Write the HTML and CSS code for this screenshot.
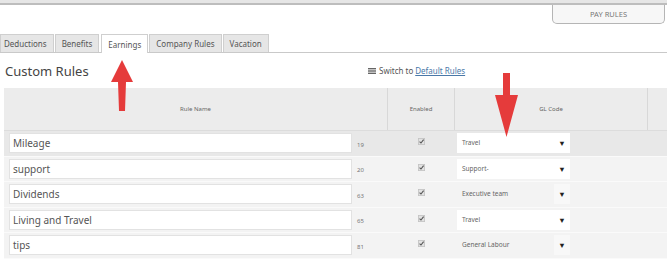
FILE: index.html
```html
<!DOCTYPE html>
<html>
  <head>
    <meta charset="UTF-8" />
    <title>Custom Rules</title>
    <link rel="stylesheet" href="styles.css">
  </head>
  <body>
    <div class="topbar"></div>
    <div class="pay-row">
      <button class="pay-rules">PAY RULES</button>
    </div>

    <!-- tab strip -->
    <div class="tabs">
      <span class="tab">Deductions</span>
      <span class="tab">Benefits</span>
      <span class="tab active">Earnings</span>
      <span class="tab">Company Rules</span>
      <span class="tab">Vacation</span>
    </div>

    <div class="title-row">
      <h1 class="title">Custom Rules</h1>
      <div class="switch">
        <svg width="8" height="6" viewBox="0 0 8 6"><rect x="0" y="0" width="8" height="1.4" fill="#666"/><rect x="0" y="2.3" width="8" height="1.4" fill="#666"/><rect x="0" y="4.6" width="8" height="1.4" fill="#666"/></svg>
        Switch to <a href="#">Default Rules</a>
      </div>
    </div>

    <div class="rules">
      <div class="head">
        <div class="hcell">Rule Name</div>
        <div class="hcell">Enabled</div>
        <div class="hcell">GL Code</div>
        <div class="hcell last"></div>
      </div>

      <div class="row current">
        <div class="name-cell"><div class="name-input">Mileage</div><span class="num">19</span></div>
        <div class="check-cell"><svg class="check" viewBox="0 0 8 8"><rect x="0.5" y="0.5" width="7" height="7" fill="#e2e2e2" stroke="#c4c4c4"/><path d="M1.8 4.2 L3.4 5.8 L6.4 1.8" stroke="#555" stroke-width="1.2" fill="none"/></svg></div>
        <div class="gl-cell"><div class="select">Travel<span class="caret">▼</span></div></div>
        <div></div>
      </div>
      <div class="row">
        <div class="name-cell"><div class="name-input">support</div><span class="num">20</span></div>
        <div class="check-cell"><svg class="check" viewBox="0 0 8 8"><rect x="0.5" y="0.5" width="7" height="7" fill="#e2e2e2" stroke="#c4c4c4"/><path d="M1.8 4.2 L3.4 5.8 L6.4 1.8" stroke="#555" stroke-width="1.2" fill="none"/></svg></div>
        <div class="gl-cell"><div class="select">Support-<span class="caret">▼</span></div></div>
        <div></div>
      </div>
      <div class="row">
        <div class="name-cell"><div class="name-input">Dividends</div><span class="num">63</span></div>
        <div class="check-cell"><svg class="check" viewBox="0 0 8 8"><rect x="0.5" y="0.5" width="7" height="7" fill="#e2e2e2" stroke="#c4c4c4"/><path d="M1.8 4.2 L3.4 5.8 L6.4 1.8" stroke="#555" stroke-width="1.2" fill="none"/></svg></div>
        <div class="gl-cell"><div class="select plain">Executive team<span class="caret">▼</span></div></div>
        <div></div>
      </div>
      <div class="row">
        <div class="name-cell"><div class="name-input">Living and Travel</div><span class="num">65</span></div>
        <div class="check-cell"><svg class="check" viewBox="0 0 8 8"><rect x="0.5" y="0.5" width="7" height="7" fill="#e2e2e2" stroke="#c4c4c4"/><path d="M1.8 4.2 L3.4 5.8 L6.4 1.8" stroke="#555" stroke-width="1.2" fill="none"/></svg></div>
        <div class="gl-cell"><div class="select">Travel<span class="caret">▼</span></div></div>
        <div></div>
      </div>
      <div class="row">
        <div class="name-cell"><div class="name-input">tips</div><span class="num">81</span></div>
        <div class="check-cell"><svg class="check" viewBox="0 0 8 8"><rect x="0.5" y="0.5" width="7" height="7" fill="#e2e2e2" stroke="#c4c4c4"/><path d="M1.8 4.2 L3.4 5.8 L6.4 1.8" stroke="#555" stroke-width="1.2" fill="none"/></svg></div>
        <div class="gl-cell"><div class="select plain">General Labour<span class="caret">▼</span></div></div>
        <div></div>
      </div>
    </div>

    <!-- red annotation arrows drawn over the screenshot -->
    <svg class="arrow arrow-up" width="26" height="56" viewBox="0 0 26 56">
      <path d="M13 1 L24 23 L17 23 L16 52 L10 52 L9 23 L2 23 Z" fill="#e53b3b"/>
    </svg>
    <svg class="arrow arrow-down" width="26" height="66" viewBox="0 0 26 66">
      <path d="M9 1 L16 1 L16 23 L24 23 L12.5 65 L1 23 L9 23 Z" fill="#e53b3b"/>
    </svg>
  </body>
</html>
```

FILE: styles.css
```css
body {
  margin: 0;
  background: #fff;
  font-family: "Noto Sans", "Liberation Sans", sans-serif;
  color: #555;
  position: relative;
  width: 667px;
  height: 261px;
  overflow: hidden;
}

.topbar {
  height: 3px;
  background: #e6e6e6;
  border-bottom: 2px solid #bdbdbd;
}

.pay-row {
  display: flex;
  justify-content: flex-end;
  padding-right: 2px;
}

.pay-rules {
  width: 113px;
  height: 19px;
  border: 1.5px solid #b5b5b5;
  border-top: none;
  border-radius: 0 0 5px 5px;
  background: #f7f7f7;
  color: #777;
  font-family: inherit;
  font-size: 7.5px;
  padding: 0;
}

/* tabs */
.tabs {
  display: flex;
  gap: 1px;
  margin-top: 10px;
  border-bottom: 1px solid #c9c9c9;
  height: 18px;
}

.tab {
  display: flex;
  align-items: center;
  padding: 0 6px;
  height: 18px;
  box-sizing: border-box;
  background: #e6e6e6;
  border: 1px solid #cfcfcf;
  border-bottom: none;
  font-size: 8px;
  color: #555;
}

.tab:first-child {
  padding-left: 3px;
}

.tab.active {
  background: #fff;
  height: 19px;
  margin-bottom: -1px;
  margin-left: 1px;
}

.title-row {
  display: flex;
  align-items: center;
  height: 35px;
}

.title {
  margin: 0 0 0 5px;
  font-size: 13px;
  font-weight: normal;
  color: #444;
  width: 363px;
}

.switch {
  display: flex;
  align-items: center;
  gap: 3px;
  font-size: 8px;
  color: #555;
}

.switch a {
  color: #4a78a8;
  text-decoration: underline;
  margin-left: -1px;
}

/* rules table */
.rules {
  margin-left: 4px;
}

.head,
.row {
  display: grid;
  grid-template-columns: 384px 67px 193px 1fr;
}

.head {
  height: 42px;
  background: #ececec;
  border-bottom: 1px solid #dcdcdc;
}

.hcell {
  display: flex;
  align-items: center;
  justify-content: center;
  border-right: 1px solid #d8d8d8;
  font-size: 6px;
  color: #666;
}

.hcell.last {
  border-right: none;
}

.row {
  height: 25.5px;
  background: #f3f3f3;
  border-bottom: 1px solid #fafafa;
  box-sizing: border-box;
}

.row.current {
  background: #e8e8e8;
}

.name-cell {
  display: flex;
  align-items: center;
  padding-left: 5px;
}

.name-input {
  width: 343px;
  height: 20px;
  box-sizing: border-box;
  background: #fff;
  border: 1px solid #e2e2e2;
  padding-left: 3px;
  font-size: 10px;
  line-height: 18px;
  color: #555;
}

.num {
  margin-left: 5px;
  margin-top: 3px;
  font-size: 6px;
  color: #777;
}

.check-cell {
  display: flex;
  align-items: center;
  justify-content: center;
  padding-bottom: 3px;
}

.check {
  width: 7px;
  height: 7px;
}

.gl-cell {
  display: flex;
  align-items: center;
  padding-left: 2px;
}

.select {
  position: relative;
  width: 113px;
  height: 20px;
  box-sizing: border-box;
  background: #fff;
  padding-left: 5px;
  font-size: 6.5px;
  line-height: 20px;
  color: #666;
}

.select.plain {
  background: transparent;
}

.caret {
  position: absolute;
  right: 0;
  top: 0;
  width: 16px;
  height: 20px;
  text-align: center;
  font-size: 7.5px;
  color: #222;
  background: #f8f8f8;
}

.select:not(.plain) .caret {
  background: #fff;
}

/* annotation arrows */
.arrow {
  position: absolute;
}

.arrow-up {
  left: 109px;
  top: 59px;
}

.arrow-down {
  left: 494px;
  top: 72px;
}
```
